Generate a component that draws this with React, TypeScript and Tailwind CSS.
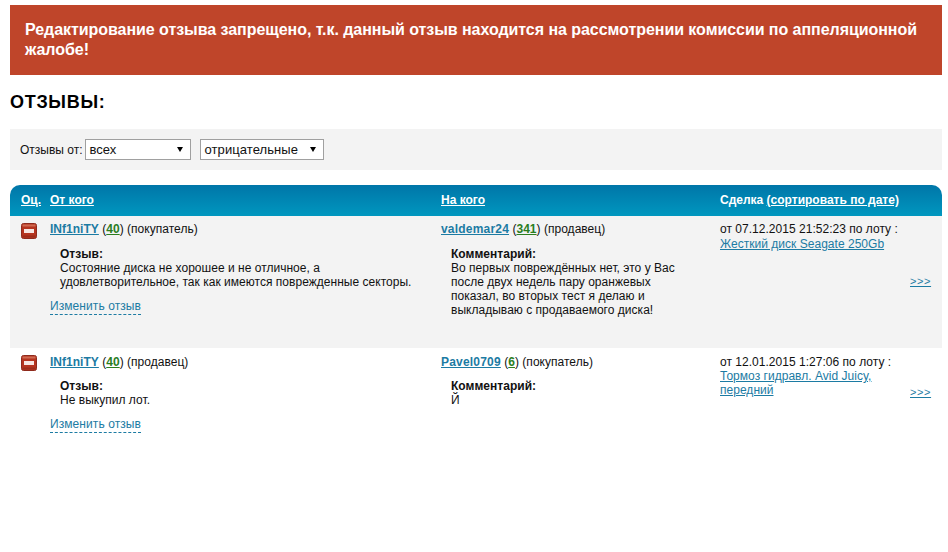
import React from "react";

function Minus() {
  return (
    <svg width="16" height="16" viewBox="0 0 16 16" className="block">
      <rect x="0.5" y="0.5" width="15" height="15" rx="2" fill="#b5341f" stroke="#8e2a1c" />
      <rect x="1.5" y="1.5" width="13" height="2" fill="#cf6a52" />
      <rect x="1.5" y="12.5" width="13" height="2" fill="#9c2c1a" />
      <rect x="3" y="6" width="10" height="4" fill="#f6e6e2" />
    </svg>
  );
}

const link = "text-[#1c7ba3] underline";

function Row({ bg, h, role, rev, other, num, otherRole, comment, deal, lot, arrowTop, nameTop, detailTop, dealLine }: any) {
  return (
    <div className={`grid grid-cols-[40px_391px_279px_1fr] ${bg} ${h} tracking-[0.025px]`}>
      <div className="pt-[7px] pl-[11px]"><Minus /></div>
      <div className={nameTop}>
        <div className="leading-[15px]">
          <a className={`${link} font-bold`}>INf1niTY</a> (<a className="text-[#2a7d1e] underline font-bold">40</a>) ({role})
        </div>
        <div className={`pl-[10px] ${detailTop} leading-[14px] w-[375px]`}>
          <div className="font-bold">Отзыв:</div>
          {rev}
        </div>
        <div className="mt-[8px]">
          <span className="text-[#1c7ba3] border-b border-dashed border-[#1c7ba3] leading-[15px] inline-block tracking-[0.08px]">Изменить отзыв</span>
        </div>
      </div>
      <div className={nameTop}>
        <div className="leading-[15px]">
          <a className={`${link} font-bold tracking-[0.2px]`}>{other}</a> (<a className="text-[#2a7d1e] underline font-bold">{num}</a>) ({otherRole})
        </div>
        <div className={`pl-[10px] ${detailTop} leading-[14px] w-[250px]`}>
          <div className="font-bold">Комментарий:</div>
          {comment}
        </div>
      </div>
      <div className={`${nameTop} flex`}>
        <div className="w-[190px] leading-[14px]">
          <div className={dealLine}>от {deal} по лоту :</div>
          <a className={link}>{lot}</a>
        </div>
        <a className={`${link} text-[11px] leading-[13px] tracking-[0.6px] ${arrowTop}`}>&gt;&gt;&gt;</a>
      </div>
    </div>
  );
}

function Caret() {
  return <span className="w-0 h-0 border-x-[3px] border-x-transparent border-t-[5px] border-t-black mb-[1px]"></span>;
}

export default function App() {
  return (
    <div className="w-[948px] h-[552px] bg-white px-[10px] pt-[5px] font-['Liberation_Sans',Arial,sans-serif] text-[12px] text-[#111] overflow-hidden">
      <div className="w-[932px] h-[70px] bg-[#bf452a] text-white font-bold text-[16px] leading-[20px] tracking-[-0.05px] pl-[15px] pr-[15px] pt-[15px]">
        Редактирование отзыва запрещено, т.к. данный отзыв находится на рассмотрении комиссии по аппеляционной жалобе!
      </div>
      <h1 className="font-bold text-[18px] leading-[21px] tracking-[0.7px] text-black mt-[17px]">ОТЗЫВЫ:</h1>
      <div className="w-[932px] h-[41px] bg-[#f3f3f3] mt-[16px] flex items-center pl-[10px]">
        <span>Отзывы от:</span>
        <div className="ml-[2px] w-[106px] h-[21px] bg-white border border-[#a0a0a0] flex items-center justify-between pl-[4px] pr-[7px] text-[13px]">
          всех<Caret />
        </div>
        <div className="ml-[9px] w-[124px] h-[21px] bg-white border border-[#a0a0a0] flex items-center justify-between pl-[4px] pr-[7px] text-[13px] tracking-[0.08px]">
          отрицательные<Caret />
        </div>
      </div>
      <div className="w-[932px] mt-[15px]">
        <div className="grid grid-cols-[40px_391px_279px_1fr] h-[31px] pb-[2px] items-center rounded-t-[10px] bg-gradient-to-b from-[#0076a8] to-[#0097bf] text-white font-bold">
          <a className="underline pl-[11px]">Оц.</a>
          <a className="underline">От кого</a>
          <a className="underline">На кого</a>
          <div>Сделка <a className="underline">(сортировать по дате)</a></div>
        </div>
        <Row
          bg="bg-[#f3f3f3]"
          h="h-[132px]"
          nameTop="pt-[6px]"
          detailTop="pt-[10px]"
          dealLine="leading-[15px]"
          role="покупатель"
          rev={<>Состояние диска не хорошее и не отличное, а<br />удовлетворительное, так как имеются поврежденные секторы.</>}
          other="valdemar24"
          num="341"
          otherRole="продавец"
          comment={<>Во первых повреждённых нет, это у Вас<br />после двух недель пару оранжевых<br />показал, во вторых тест я делаю и<br />выкладываю с продаваемого диска!</>}
          deal="07.12.2015 21:52:23"
          lot="Жесткий диск Seagate 250Gb"
          arrowTop="mt-[53px]"
        />
        <Row
          bg="bg-white"
          h="h-[90px]"
          nameTop="pt-[7px]"
          detailTop="pt-[9px]"
          dealLine="leading-[14px]"
          role="продавец"
          rev="Не выкупил лот."
          other="Pavel0709"
          num="6"
          otherRole="покупатель"
          comment="Й"
          deal="12.01.2015 1:27:06"
          lot={<>Тормоз гидравл. Avid Juicy,<br />передний</>}
          arrowTop="mt-[31px]"
        />
      </div>
    </div>
  );
}
